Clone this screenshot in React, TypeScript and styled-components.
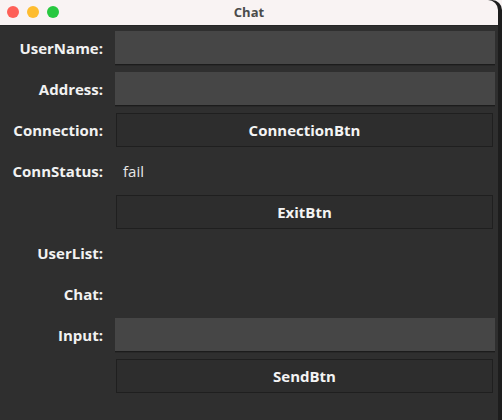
import React from "react";
import styled, { createGlobalStyle } from "styled-components";

const Global = createGlobalStyle`
  html, body { margin: 0; padding: 0; background: #f9f4f4; }
  body { width: 502px; height: 420px; overflow: hidden; }
  #root { width: 502px; height: 420px; }
`;

const Frame = styled.div`
  width: 502px;
  height: 420px;
  display: flex;
  background: #1d1d1d;
  border-top-right-radius: 10px;
  overflow: hidden;
`;

const Window = styled.div`
  width: 498px;
  height: 420px;
  display: flex;
  flex-direction: column;
  background: #2f2f2f;
  border-top-right-radius: 10px;
  overflow: hidden;
`;

const TitleBar = styled.div`
  height: 25px;
  flex: none;
  background: #f9f3f3;
  border-bottom: 1px solid #262626;
  display: flex;
  align-items: center;
  position: relative;
  padding-left: 7px;
  gap: 8px;
`;

const Light = styled.span<{ $c: string }>`
  width: 12px;
  height: 12px;
  border-radius: 50%;
  background: ${(p) => p.$c};
  margin-top: -2px;
`;

const Title = styled.div`
  position: absolute;
  left: 0;
  right: 0;
  top: 3px;
  text-align: center;
  font-family: "Open Sans", "Noto Sans", sans-serif;
  font-weight: 700;
  font-size: 13px;
  color: #4b4b4b;
`;

const Form = styled.div`
  display: grid;
  grid-template-columns: 103px 1fr;
  grid-auto-rows: 34px;
  column-gap: 12px;
  row-gap: 7px;
  padding: 5px 3px 0 0;
  font-family: "Open Sans", "Noto Sans", sans-serif;
`;

const Label = styled.div`
  display: flex;
  align-items: center;
  justify-content: flex-end;
  font-weight: 700;
  font-size: 15px;
  color: #f2f2f2;
`;

const Field = styled.div`
  height: 33px;
  background: #464646;
  border-bottom: 1px solid #1c1c1c;
  box-shadow: 0 1px 0 #282828;
`;

const Button = styled.div`
  margin: 0 2px 0 1px;
  display: flex;
  align-items: center;
  justify-content: center;
  border: 1px solid #1f1f1f;
  background: #2d2d2d;
  font-weight: 700;
  font-size: 15px;
  color: #f4f4f4;
`;

const Value = styled.div`
  display: flex;
  align-items: center;
  padding-left: 8px;
  font-size: 15px;
  color: #e8e8e8;
`;

const Empty = styled.div``;

export default function App() {
  return (
    <>
      <Global />
      <Frame>
        <Window>
          <TitleBar>
            <Light $c="#fe5f57" />
            <Light $c="#febc2e" />
            <Light $c="#28c840" />
            <Title>Chat</Title>
          </TitleBar>
          <Form>
            <Label>UserName:</Label>
            <Field />
            <Label>Address:</Label>
            <Field />
            <Label>Connection:</Label>
            <Button>ConnectionBtn</Button>
            <Label>ConnStatus:</Label>
            <Value>fail</Value>
            <Empty />
            <Button>ExitBtn</Button>
            <Label>UserList:</Label>
            <Empty />
            <Label>Chat:</Label>
            <Empty />
            <Label>Input:</Label>
            <Field />
            <Empty />
            <Button>SendBtn</Button>
          </Form>
        </Window>
      </Frame>
    </>
  );
}
